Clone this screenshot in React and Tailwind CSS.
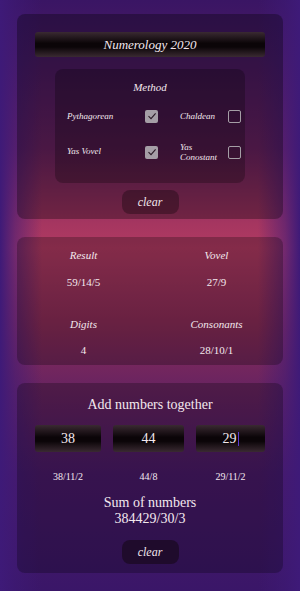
import React from "react";

const serif = { fontFamily: '"Liberation Serif", "DejaVu Serif", serif' };

function Check({ checked }) {
  return checked ? (
    <div className="w-[13px] h-[13px] rounded-[2px] bg-[#a59ea6] flex items-center justify-center">
      <svg width="10" height="10" viewBox="0 0 10 10">
        <path d="M1.5 5.2 L4 7.6 L8.6 2.4" fill="none" stroke="#2a1a26" strokeWidth="1.1" />
      </svg>
    </div>
  ) : (
    <div className="w-[13px] h-[13px] rounded-[2px] border-[1.5px] border-[#a59ea6]" />
  );
}

function Clear({ dark }) {
  return (
    <div className="flex justify-center">
      <div className={`w-[57px] h-[24px] rounded-lg flex items-center justify-center text-[12px] italic text-[#f1e6ec] ${dark ? "bg-[#1c0a24]/80" : "bg-black/30"}`}>
        clear
      </div>
    </div>
  );
}

export default function App() {
  const inputBg = "bg-[linear-gradient(to_bottom,#3a2a32,#0b0508_45%,#0b0508_60%,#3a2a32)]";
  return (
    <div
      className="relative w-[300px] h-[591px] overflow-hidden text-[#f3e8ee]"
      style={serif}
    >
      <div className="absolute inset-0 bg-[linear-gradient(to_bottom,#3a1564_0%,#4a1a64_10%,#6a2262_25%,#a63660_38%,#b03a62_42%,#8a2c58_55%,#6a2460_65%,#4a1a68_80%,#3a1668_100%)]" />
      <div className="absolute inset-0 bg-[linear-gradient(to_right,#3e1a78_0%,rgba(62,26,120,0.55)_5%,rgba(62,26,120,0)_14%,rgba(62,26,120,0)_86%,rgba(62,26,120,0.55)_95%,#3e1a78_100%)]" />
      <div className="relative flex flex-col px-[17px] pt-[14px] gap-[18px]">
        {/* Card 1 */}
        <div className="h-[205px] rounded-lg bg-black/30 px-[18px] pt-[18px] flex flex-col">
          <div className={`h-[25px] rounded-[3px] ${inputBg} flex items-center justify-center text-[13px] italic`}>
            Numerology 2020
          </div>
          <div className="mx-[20px] mt-[12px] h-[114px] rounded-lg bg-black/25 flex flex-col pt-[10px]">
            <div className="text-center text-[11px] italic">Method</div>
            <div className="grid grid-cols-[78px_35px_48px_13px] items-center pl-[12px] mt-[14px] gap-y-0">
              <div className="text-[9px] italic">Pythagorean</div>
              <Check checked />
              <div className="text-[9px] italic">Chaldean</div>
              <Check />
              <div className="text-[9px] italic mt-[19px]">Yas Vovel</div>
              <div className="mt-[19px]"><Check checked /></div>
              <div className="text-[9px] italic leading-[10px] mt-[19px]">Yas<br />Conostant</div>
              <div className="mt-[19px]"><Check /></div>
            </div>
          </div>
          <div className="mt-[7px]">
            <Clear />
          </div>
        </div>

        {/* Card 2 */}
        <div className="h-[128px] rounded-lg bg-black/25 grid grid-cols-2 pt-[10px] text-center">
          <div className="flex flex-col items-center">
            <div className="text-[11px] italic">Result</div>
            <div className="text-[11px] mt-[10px]">59/14/5</div>
            <div className="text-[11px] italic mt-[26px]">Digits</div>
            <div className="text-[11px] mt-[9px]">4</div>
          </div>
          <div className="flex flex-col items-center">
            <div className="text-[11px] italic">Vovel</div>
            <div className="text-[11px] mt-[10px]">27/9</div>
            <div className="text-[11px] italic mt-[26px]">Consonants</div>
            <div className="text-[11px] mt-[9px]">28/10/1</div>
          </div>
        </div>

        {/* Card 3 */}
        <div className="h-[190px] rounded-lg bg-black/25 flex flex-col px-[18px] pt-[11px]">
          <div className="text-center text-[14px]">Add numbers together</div>
          <div className="flex gap-[12px] mt-[10px]">
            <div className={`w-[66px] h-[27px] rounded-[3px] ${inputBg} flex items-center justify-center text-[14px]`}>38</div>
            <div className={`w-[71px] h-[27px] rounded-[3px] ${inputBg} flex items-center justify-center text-[14px]`}>44</div>
            <div className={`w-[69px] h-[27px] rounded-[3px] ${inputBg} flex items-center justify-center text-[14px]`}>
              29<span className="inline-block w-[1px] h-[14px] bg-[#5a3ad0] ml-[1px]" />
            </div>
          </div>
          <div className="flex mt-[17px] text-[10px]">
            <div className="w-[66px] text-center">38/11/2</div>
            <div className="w-[71px] ml-[12px] text-center">44/8</div>
            <div className="w-[69px] ml-[12px] text-center">29/11/2</div>
          </div>
          <div className="text-center text-[14px] leading-[16px] mt-[11px]">
            Sum of numbers
            <br />
            384429/30/3
          </div>
          <div className="mt-[13px]">
            <Clear dark />
          </div>
        </div>
      </div>
    </div>
  );
}
